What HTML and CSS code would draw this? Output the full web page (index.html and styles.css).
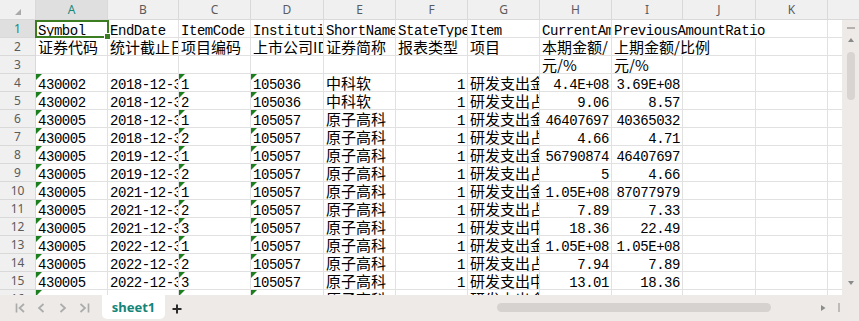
FILE: index.html
```html
<!DOCTYPE html>
<html>
<head>
    <meta charset="utf-8">
    <title>sheet1</title>
    <link rel="stylesheet" href="styles.css">
</head>
<body>
    <div class="book">
        <div class="sheet">
            <div class="grid" id="grid"></div>
            <div class="vscroll">
                <div class="vscroll-head"></div>
                <div class="vscroll-track">
                    <span class="split-mark"></span>
                    <span class="arrow-up"></span>
                    <div class="vthumb"></div>
                    <span class="arrow-down"></span>
                </div>
            </div>
        </div>
        <div class="tabbar">
            <svg class="nav" width="102" height="26" viewBox="0 0 102 26">
                <g fill="none" stroke="#ababab" stroke-width="1.7">
                    <path d="M16.5 8.5v9"/>
                    <path d="M24 9l-4.5 4 4.5 4"/>
                    <path d="M43.5 9l-4.5 4 4.5 4"/>
                    <path d="M60.5 9l4.5 4-4.5 4"/>
                    <path d="M80.5 9l4.5 4-4.5 4"/>
                    <path d="M88.5 8.5v9"/>
                </g>
            </svg>
            <div class="tab">sheet1</div>
            <svg class="add" width="24" height="26" viewBox="0 0 24 26">
                <path d="M7.5 14h9M12 9.5v9" stroke="#2b2b2b" stroke-width="2" fill="none"/>
            </svg>
            <div class="hscroll">
                <div class="hthumb"></div>
            </div>
            <svg class="hscroll-end" width="44" height="26" viewBox="0 0 44 26">
                <path d="M6 10l4.5 3-4.5 3z" fill="#8c8c8c"/>
                <path d="M24 8v9" stroke="#a8a8a8" stroke-width="1.4"/>
            </svg>
        </div>
    </div>

    <script>
        // Sheet content, columns A..I
        const COLS = ['A', 'B', 'C', 'D', 'E', 'F', 'G', 'H', 'I', 'J', 'K', ''];
        const DATA = [
            ['Symbol', 'EndDate', 'ItemCode', 'InstitutionID', 'ShortName', 'StateTypeCode', 'Item', 'CurrentAmount', 'PreviousAmountRatio'],
            ['证券代码', '统计截止日期', '项目编码', '上市公司ID', '证券简称', '报表类型', '项目', '本期金额/', '上期金额/比例'],
            ['', '', '', '', '', '', '', '元/%', '元/%'],
            ['430002', '2018-12-31', '1', '105036', '中科软', '1', '研发支出金额', '4.4E+08', '3.69E+08'],
            ['430002', '2018-12-31', '2', '105036', '中科软', '1', '研发支出占营业收入比例', '9.06', '8.57'],
            ['430005', '2018-12-31', '1', '105057', '原子高科', '1', '研发支出金额', '46407697', '40365032'],
            ['430005', '2018-12-31', '2', '105057', '原子高科', '1', '研发支出占营业收入比例', '4.66', '4.71'],
            ['430005', '2019-12-31', '1', '105057', '原子高科', '1', '研发支出金额', '56790874', '46407697'],
            ['430005', '2019-12-31', '2', '105057', '原子高科', '1', '研发支出占营业收入比例', '5', '4.66'],
            ['430005', '2021-12-31', '1', '105057', '原子高科', '1', '研发支出金额', '1.05E+08', '87077979'],
            ['430005', '2021-12-31', '2', '105057', '原子高科', '1', '研发支出占营业收入比例', '7.89', '7.33'],
            ['430005', '2021-12-31', '3', '105057', '原子高科', '1', '研发支出中资本化比例', '18.36', '22.49'],
            ['430005', '2022-12-31', '1', '105057', '原子高科', '1', '研发支出金额', '1.05E+08', '1.05E+08'],
            ['430005', '2022-12-31', '2', '105057', '原子高科', '1', '研发支出占营业收入比例', '7.94', '7.89'],
            ['430005', '2022-12-31', '3', '105057', '原子高科', '1', '研发支出中资本化比例', '13.01', '18.36'],
            ['430005', '2023-12-31', '1', '105057', '原子高科', '1', '研发支出金额', '', '']
        ];
        const FLAG_COLS = [0, 2, 3];   // numbers stored as text
        const NUM_COLS = [5, 7, 8];

        const grid = document.getElementById('grid');

        function addCell(cls, text) {
            const el = document.createElement('div');
            el.className = cls;
            el.textContent = text;
            grid.appendChild(el);
            return el;
        }

        // Column headers
        const corner = addCell('corner', '');
        corner.appendChild(document.createElement('span')).className = 'corner-mark';
        COLS.forEach((name, c) => {
            let cls = 'col-head';
            if (c === 0) cls += ' sel';
            if (c === COLS.length - 1) cls += ' edge';
            addCell(cls, name);
        });

        // Rows
        DATA.forEach((row, r) => {
            addCell('row-head' + (r === 0 ? ' sel' : ''), r + 1);
            COLS.forEach((_, c) => {
                const text = row[c] || '';
                let cls = 'cell';
                if (/[\u3400-\u9fff]/.test(text)) cls += ' cjk';
                if (r >= 3 && NUM_COLS.includes(c)) cls += ' num';
                if (r >= 3 && FLAG_COLS.includes(c)) cls += ' flag';
                if ((r === 0 && (c === 8 || c === 9)) || (r === 1 && c === 8)) cls += ' spill';
                if (c === COLS.length - 1) cls += ' edge';
                const el = addCell(cls, text);
                if (r === 0 && c === 0) {
                    el.classList.add('active');
                    el.appendChild(document.createElement('div')).className = 'cursor';
                }
            });
        });
    </script>
</body>
</html>
```

FILE: styles.css
```css
body {
    margin: 0;
    background: #fff;
    font-family: "Liberation Mono", monospace;
}
.book {
    width: 859px;
    height: 321px;
    display: flex;
    flex-direction: column;
    overflow: hidden;
}
.sheet {
    display: flex;
    height: 295px;
}
.grid {
    width: 842px;
    height: 295px;
    overflow: hidden;
    display: grid;
    grid-template-columns: 36px 72px 71px 72px 73px 72px 72px 72px 72px 71px 73px 72px 14px;
    grid-template-rows: 20px;
    grid-auto-rows: 18px;
    background: #fff;
}

/* headers */
.corner,
.col-head,
.row-head {
    box-sizing: border-box;
    background: #f0f0f0;
    border-right: 1px solid #d9d9d9;
    border-bottom: 1px solid #d9d9d9;
    font: 12px "Noto Sans", sans-serif;
    color: #5b5b5b;
    text-align: center;
}
.corner {
    padding: 9px 0 0 15px;
}
.corner-mark {
    display: block;
    width: 0;
    height: 0;
    border-left: 6px solid transparent;
    border-bottom: 6px solid #a9a9a9;
}
.col-head {
    line-height: 19px;
}
.row-head {
    line-height: 17px;
}
.col-head.sel,
.row-head.sel {
    background: #dfdfdf;
    color: #17897c;
}
.col-head.edge {
    border-right: none;
}

/* cells */
.cell {
    box-sizing: border-box;
    border-right: 1px solid #e1e1e1;
    border-bottom: 1px solid #e1e1e1;
    overflow: hidden;
    white-space: nowrap;
    padding: 4px 2px 0 2px;
    font-size: 14px;
    line-height: 15px;
    letter-spacing: -0.45px;
    color: #000;
}
.cell.cjk {
    font: 15px/15px "Noto Sans CJK SC", sans-serif;
    letter-spacing: 0;
    padding-top: 1px;
}
.cell.num {
    text-align: right;
}
.cell.spill {
    overflow: visible;
    border-right-color: transparent;
}
.cell.edge {
    border-right: none;
}
.cell.flag {
    position: relative;
}
.cell.flag::before {
    content: "";
    position: absolute;
    top: 0;
    left: 0;
    border-top: 6px solid #1a7f1c;
    border-right: 6px solid transparent;
}
.cell.active {
    position: relative;
    overflow: visible;
}
.cursor {
    position: absolute;
    left: -1px;
    top: 0;
    right: -2px;
    bottom: -1px;
    border: 2px solid #3c7d22;
    z-index: 2;
}
.cursor::after {
    content: "";
    position: absolute;
    right: -4px;
    bottom: -4px;
    width: 5px;
    height: 5px;
    background: #3c7d22;
    border: 1px solid #fff;
}

/* vertical scrollbar */
.vscroll {
    width: 17px;
    display: flex;
    flex-direction: column;
}
.vscroll-head {
    height: 20px;
    box-sizing: border-box;
    background: #f0f0f0;
    border-bottom: 1px solid #d9d9d9;
}
.vscroll-track {
    flex: 1;
    background: #eeeae7;
    display: flex;
    flex-direction: column;
    align-items: center;
    padding: 7px 0 10px 1px;
}
.split-mark {
    width: 8px;
    height: 2px;
    background: #b5b1ae;
}
.arrow-up {
    margin-top: 9px;
    border-left: 3px solid transparent;
    border-right: 3px solid transparent;
    border-bottom: 4px solid #8a8a8a;
}
.vthumb {
    margin-top: 10px;
    width: 8px;
    height: 48px;
    border-radius: 4px;
    background: #d8d4d1;
}
.arrow-down {
    margin-top: auto;
    border-left: 3px solid transparent;
    border-right: 3px solid transparent;
    border-top: 4px solid #8a8a8a;
}

/* sheet tabs */
.tabbar {
    height: 26px;
    background: #eeeae7;
    display: flex;
    align-items: flex-start;
}
.nav,
.add,
.hscroll-end {
    display: block;
    flex: none;
}
.tab {
    width: 63px;
    height: 24px;
    background: #fff;
    border-radius: 0 0 5px 5px;
    font: 700 13px/24px "Noto Sans", sans-serif;
    color: #138579;
    text-align: center;
}
.hscroll {
    flex: 1;
    height: 26px;
    box-sizing: border-box;
    padding-top: 8px;
}
.hthumb {
    margin-left: 308px;
    width: 274px;
    height: 9px;
    border-radius: 4.5px;
    background: #d6d2cf;
}
```
